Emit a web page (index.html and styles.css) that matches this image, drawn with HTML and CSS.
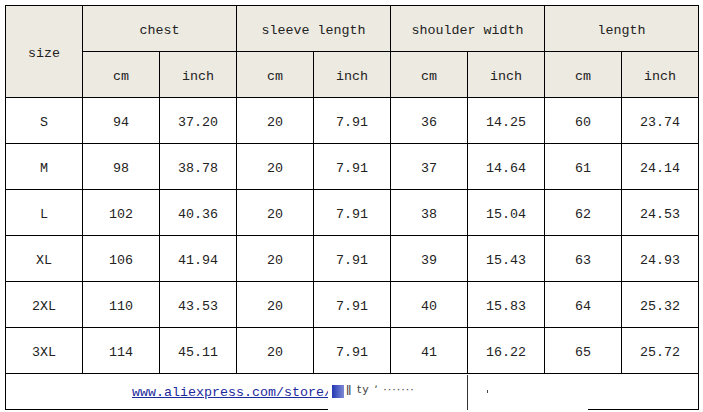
FILE: index.html
```html
<!DOCTYPE html>
<html>
<head>
<meta charset="utf-8">
<link rel="stylesheet" href="styles.css">
</head>
<body>
<table class="size-table">
  <colgroup>
    <col class="c"><col class="c"><col class="c"><col class="c"><col class="c"><col class="c"><col class="c"><col class="c"><col class="c">
  </colgroup>
  <thead>
    <tr class="row">
      <th rowspan="2">size</th>
      <th colspan="2">chest</th>
      <th colspan="2">sleeve length</th>
      <th colspan="2">shoulder width</th>
      <th colspan="2">length</th>
    </tr>
    <tr class="row">
      <th>cm</th><th>inch</th><th>cm</th><th>inch</th><th>cm</th><th>inch</th><th>cm</th><th>inch</th>
    </tr>
  </thead>
  <tbody>
    <tr class="row"><td>S</td><td>94</td><td>37.20</td><td>20</td><td>7.91</td><td>36</td><td>14.25</td><td>60</td><td>23.74</td></tr>
    <tr class="row"><td>M</td><td>98</td><td>38.78</td><td>20</td><td>7.91</td><td>37</td><td>14.64</td><td>61</td><td>24.14</td></tr>
    <tr class="row"><td>L</td><td>102</td><td>40.36</td><td>20</td><td>7.91</td><td>38</td><td>15.04</td><td>62</td><td>24.53</td></tr>
    <tr class="row"><td>XL</td><td>106</td><td>41.94</td><td>20</td><td>7.91</td><td>39</td><td>15.43</td><td>63</td><td>24.93</td></tr>
    <tr class="row"><td>2XL</td><td>110</td><td>43.53</td><td>20</td><td>7.91</td><td>40</td><td>15.83</td><td>64</td><td>25.32</td></tr>
    <tr class="row"><td>3XL</td><td>114</td><td>45.11</td><td>20</td><td>7.91</td><td>41</td><td>16.22</td><td>65</td><td>25.72</td></tr>
  </tbody>
  <tfoot>
    <tr class="foot">
      <td colspan="9" class="foot-cell">
        <a class="store-link" href="#">www.aliexpress.com/store/</a>
        <div class="patch">
          <span class="blob"></span>
          <span class="smudge">ǁ ty ʼ ·······</span>
          <span class="vline"></span>
          <span class="dot"></span>
        </div>
      </td>
    </tr>
  </tfoot>
</table>
</body>
</html>
```

FILE: styles.css
```css
html, body {
  margin: 0;
  padding: 0;
  background: #ffffff;
}
body {
  padding: 5px 0 0 5px;
  font-family: "Liberation Mono", "DejaVu Sans Mono", monospace;
  font-size: 13.33px;
  color: #222222;
}
.size-table {
  border-collapse: collapse;
  table-layout: fixed;
  width: 694px;
}
.c {
  width: 77px;
}
.size-table th,
.size-table td {
  border: 1px solid #000;
  padding: 3px 0 0 0;
  text-align: center;
  vertical-align: middle;
  font-weight: normal;
  white-space: nowrap;
}
.size-table th {
  background: #eceae1;
}
.row {
  height: 46px;
}
.foot {
  height: 36px;
}
.foot-cell {
  position: relative;
  text-align: left !important;
  padding-left: 126px !important;
  padding-top: 2px !important;
}
.store-link {
  color: #1c2a9c;
  text-decoration: underline;
}
.patch {
  position: absolute;
  left: 322px;
  top: 1px;
  width: 260px;
  bottom: -3px;
  background: #ffffff;
}
.blob {
  position: absolute;
  left: 4px;
  top: 10px;
  width: 12px;
  height: 13px;
  background: linear-gradient(90deg, #2338b4, #7d8ad4);
}
.smudge {
  position: absolute;
  left: 18px;
  top: 8px;
  font-family: "DejaVu Sans", sans-serif;
  font-size: 11px;
  letter-spacing: 1px;
  color: #444444;
}
.vline {
  position: absolute;
  left: 139px;
  top: 0;
  bottom: 0;
  width: 1px;
  background: #333;
}
.dot {
  position: absolute;
  left: 159px;
  top: 15px;
  width: 1px;
  height: 3px;
  background: #444;
}
```
